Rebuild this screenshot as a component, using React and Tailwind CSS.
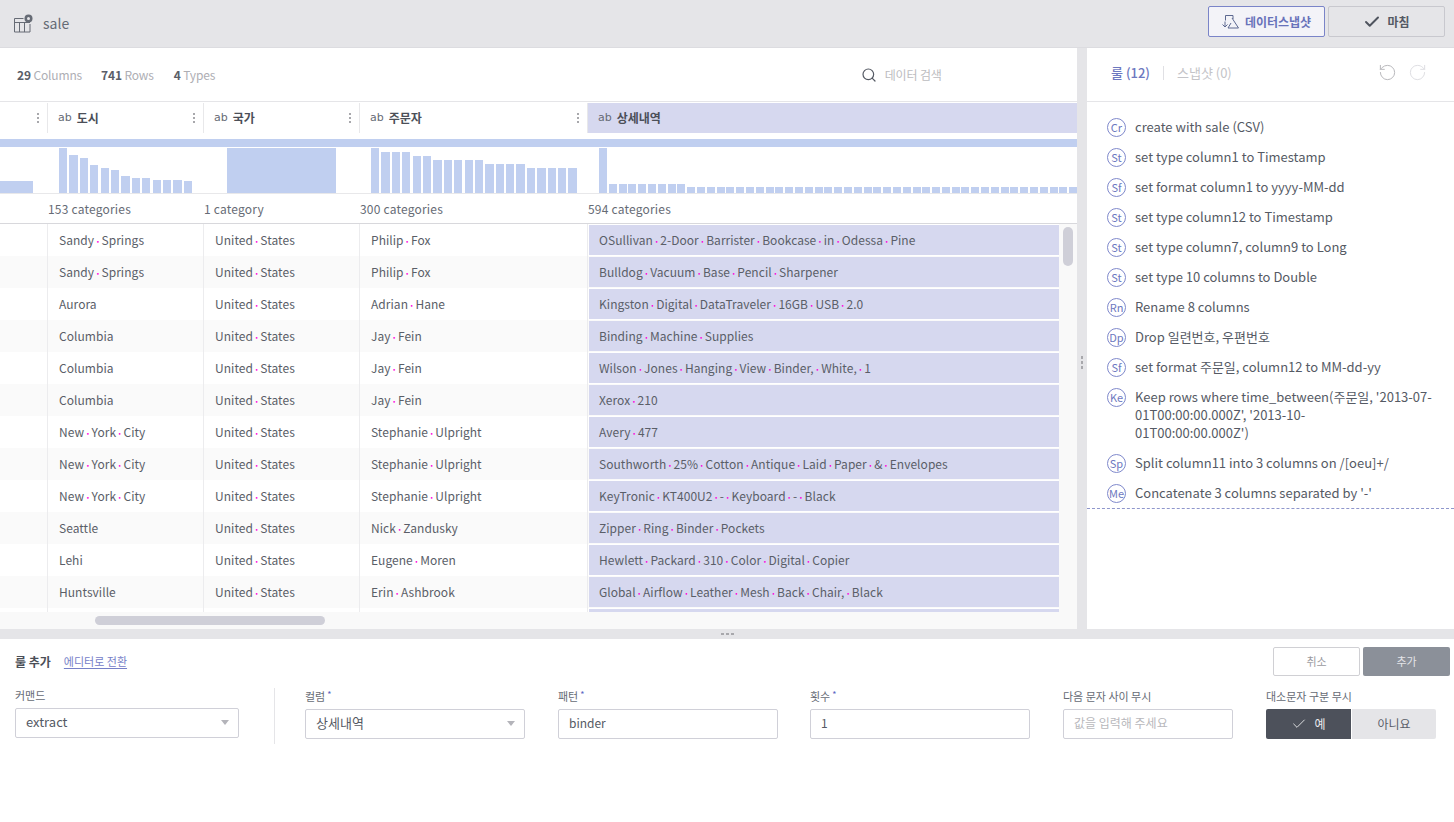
import React from 'react';
import { Check, RotateCcw, RotateCw, Search } from 'lucide-react';

const FONT = '"Noto Sans CJK KR", "Noto Sans", sans-serif';

const rows = [
  ['Sandy Springs', 'United States', 'Philip Fox', 'OSullivan 2-Door Barrister Bookcase in Odessa Pine'],
  ['Sandy Springs', 'United States', 'Philip Fox', 'Bulldog Vacuum Base Pencil Sharpener'],
  ['Aurora', 'United States', 'Adrian Hane', 'Kingston Digital DataTraveler 16GB USB 2.0'],
  ['Columbia', 'United States', 'Jay Fein', 'Binding Machine Supplies'],
  ['Columbia', 'United States', 'Jay Fein', 'Wilson Jones Hanging View Binder, White, 1'],
  ['Columbia', 'United States', 'Jay Fein', 'Xerox 210'],
  ['New York City', 'United States', 'Stephanie Ulpright', 'Avery 477'],
  ['New York City', 'United States', 'Stephanie Ulpright', 'Southworth 25% Cotton Antique Laid Paper & Envelopes'],
  ['New York City', 'United States', 'Stephanie Ulpright', 'KeyTronic KT400U2 - Keyboard - Black'],
  ['Seattle', 'United States', 'Nick Zandusky', 'Zipper Ring Binder Pockets'],
  ['Lehi', 'United States', 'Eugene Moren', 'Hewlett Packard 310 Color Digital Copier'],
  ['Huntsville', 'United States', 'Erin Ashbrook', 'Global Airflow Leather Mesh Back Chair, Black'],
];

const rules = [
  ['Cr', 'create with sale (CSV)'],
  ['St', 'set type column1 to Timestamp'],
  ['Sf', 'set format column1 to yyyy-MM-dd'],
  ['St', 'set type column12 to Timestamp'],
  ['St', 'set type column7, column9 to Long'],
  ['St', 'set type 10 columns to Double'],
  ['Rn', 'Rename 8 columns'],
  ['Dp', 'Drop 일련번호, 우편번호'],
  ['Sf', 'set format 주문일, column12 to MM-dd-yy'],
  ['Ke', "Keep rows where time_between(주문일, '2013-07-\n01T00:00:00.000Z', '2013-10-\n01T00:00:00.000Z')"],
  ['Sp', 'Split column11 into 3 columns on /[oeu]+/'],
  ['Me', "Concatenate 3 columns separated by '-'"],
];

const cityBars = [45, 38, 35, 28, 25, 23, 17, 15, 15, 13, 13, 13, 12];
const nameBars = [45, 41, 41, 41, 37, 37, 33, 33, 33, 33, 33, 29, 29, 29, 29, 25, 25, 25, 25, 25];
const detailBars = [45, 9, 9, 9, 9, 9, 9, 9, 9, ...Array(41).fill(6)];

// spaces in cell values show up as small pink dots
const Spaced = ({ text }) => {
  const parts = text.split(' ');
  return (
    <span className="whitespace-nowrap">
      {parts.map((p, i) => (
        <React.Fragment key={i}>
          {i > 0 && <span className="text-[#ff00dd] font-bold text-[9px] mx-[1px]">·</span>}
          {p}
        </React.Fragment>
      ))}
    </span>
  );
};

const HeaderCell = ({ name, className, selected }) => (
  <div className={`flex items-center h-full pl-[10px] pr-[8px] ${className} ${selected ? 'bg-[#d6d8ef]' : 'border-r border-[#e8e8ea]'}`}>
    <span className="text-[11px] text-[#666b75] mr-[5px]" style={{ fontFamily: '"DejaVu Sans", sans-serif' }}>ab</span>
    <span className="text-[12px] font-bold text-[#4b4f58] flex-1">{name}</span>
    {!selected && (
      <span className="flex flex-col gap-[2px]">
        <i className="block w-[2px] h-[2px] bg-[#a8a8ac]" />
        <i className="block w-[2px] h-[2px] bg-[#a8a8ac]" />
        <i className="block w-[2px] h-[2px] bg-[#a8a8ac]" />
      </span>
    )}
  </div>
);

const Bars = ({ data, className, barClass }) => (
  <div className={`flex items-end h-full overflow-hidden ${className}`}>
    {data.map((h, i) => (
      <div key={i} className={`shrink-0 bg-[#c0cff0] ${barClass}`} style={{ height: h }} />
    ))}
  </div>
);

const Field = ({ label, required, className, children }) => (
  <div className={className}>
    <div className="h-[15px] flex items-start text-[11px] leading-[15px] text-[#666b75] mb-[5px] whitespace-nowrap">
      {label}
      {required && <span className="text-[#5b66c4] text-[9px] leading-[11px] ml-[2px]">*</span>}
    </div>
    {children}
  </div>
);

const Input = ({ value, placeholder }) => (
  <div className="h-[30px] border border-[#d0d0d8] rounded-[2px] bg-white px-[10px] pb-[2px] flex items-center text-[12px]">
    {value ? <span className="text-[#555a64]">{value}</span> : <span className="text-[#b8b8bc]">{placeholder}</span>}
  </div>
);

const Select = ({ value }) => (
  <div className="h-[30px] border border-[#d0d0d8] rounded-[2px] bg-white pl-[10px] pr-[9px] pb-[2px] flex items-center justify-between text-[13px] text-[#555a64]">
    {value}
    <span className="w-0 h-0 border-x-[4px] border-x-transparent border-t-[5px] border-t-[#b4b4ba]" />
  </div>
);

export default function App() {
  return (
    <div className="w-[1454px] h-[822px] overflow-hidden flex flex-col bg-white" style={{ fontFamily: FONT }}>
      {/* top bar */}
      <div className="h-[48px] shrink-0 bg-[#e5e5e8] border-b border-[#dcdce0] flex items-center pl-[14px] pr-[9px]">
        <svg width="19" height="19" viewBox="0 0 19 19" fill="none" stroke="#666b75" strokeWidth="1" className="mr-[10px]">
          <path d="M9.5 4.5H0.5V18H16V10" />
          <path d="M0.5 8.5H16M5.5 8.5V18M10.5 8.5V18" />
          <circle cx="14.5" cy="4.5" r="4" fill="#666b75" stroke="none" />
          <circle cx="14.5" cy="4.5" r="1.5" fill="#e5e5e8" stroke="none" />
        </svg>
        <span className="text-[14px] text-[#666b75] flex-1">sale</span>
        <button className="w-[117px] h-[31px] mr-[3px] mb-[4px] border border-[#7a84c8] rounded-[2px] bg-[#f3f3f8] flex items-center justify-center text-[12px] font-bold text-[#6872ba]">
          <svg width="17" height="14" viewBox="0 0 17 14" fill="none" stroke="#5c6890" strokeWidth="1" className="mr-[6px]">
            <path d="M3.5 5.5V0.5H11V4" />
            <path d="M10 3L16.5 13H6L9 8" />
            <path d="M3 6.5V12M0.5 9.5L3 12L5.5 9.5" />
          </svg>
          데이터스냅샷
        </button>
        <button className="w-[117px] h-[31px] mb-[4px] border border-[#c8c8ce] rounded-[2px] bg-[#e5e5e8] flex items-center justify-center text-[12px] font-bold text-[#555a64]">
          <Check size={18} strokeWidth={2.6} color="#4f545e" className="mr-[6px]" />
          마침
        </button>
      </div>

      {/* main */}
      <div className="h-[581px] shrink-0 flex">
        <div className="w-[1077px] shrink-0 flex flex-col">
          <div className="h-[54px] shrink-0 border-b border-[#e5e5e8] flex items-center pl-[17px] text-[12px] tracking-[-0.15px] text-[#aeaeb4]">
            <span className="mr-[19px]"><b className="text-[#5a5e68] font-bold">29</b> Columns</span>
            <span className="mr-[20px]"><b className="text-[#5a5e68] font-bold">741</b> Rows</span>
            <span className="w-[687px]"><b className="text-[#5a5e68] font-bold">4</b> Types</span>
            <Search size={16} strokeWidth={1.8} color="#555a64" className="mr-[8px]" />
            <span className="text-[#bcbcc0]">데이터 검색</span>
          </div>

          <div className="h-[30px] shrink-0 flex mt-[1px]">
            <HeaderCell name="" className="w-[48px] !pl-0 [&>span:first-child]:invisible" />
            <HeaderCell name="도시" className="w-[156px]" />
            <HeaderCell name="국가" className="w-[156px]" />
            <HeaderCell name="주문자" className="w-[228px]" />
            <HeaderCell name="상세내역" className="flex-1" selected />
          </div>

          <div className="h-[8px] shrink-0 bg-[#c0cff0] mt-[6px]" />

          <div className="h-[47px] shrink-0 flex border-b border-[#e8e8ea] pt-[1px]">
            <Bars data={[12]} className="w-[48px]" barClass="w-[33px]" />
            <Bars data={cityBars} className="w-[156px] pl-[11px]" barClass="w-[8.3px] mr-[2.1px]" />
            <Bars data={[45]} className="w-[156px] pl-[23px]" barClass="w-[109px]" />
            <Bars data={nameBars} className="w-[228px] pl-[11px]" barClass="w-[8.3px] mr-[2.1px]" />
            <Bars data={detailBars} className="flex-1 pl-[11px]" barClass="w-[8px] mr-[1.8px]" />
          </div>

          <div className="h-[30px] shrink-0 flex items-center border-b border-[#d8d8dc] text-[12px] tracking-[0.2px] text-[#666b75]">
            <div className="w-[48px]" />
            <div className="w-[156px]">153 categories</div>
            <div className="w-[156px]">1 category</div>
            <div className="w-[228px]">300 categories</div>
            <div>594 categories</div>
          </div>

          <div className="flex-1 min-h-0 flex">
            <div className="w-[1059px] flex flex-col">
              <div className="h-[388px] shrink-0 overflow-hidden text-[12px] tracking-[0.04px] text-[#5a5e68]">
                {[...rows, ['', '', '', '']].map((r, i) => (
                  <div key={i} className={`h-[32px] flex ${i % 2 ? 'bg-[#fafafa]' : 'bg-white'}`}>
                    <div className="w-[48px] border-r border-[#ececee]" />
                    <div className="w-[156px] border-r border-[#ececee] pl-[11px] flex items-center"><Spaced text={r[0]} /></div>
                    <div className="w-[156px] border-r border-[#ececee] pl-[11px] flex items-center"><Spaced text={r[1]} /></div>
                    <div className="w-[228px] border-r border-[#ececee] pl-[11px] flex items-center"><Spaced text={r[2]} /></div>
                    <div className="flex-1 pl-[1px] py-[1px]">
                      <div className="h-full bg-[#d6d8ef] pl-[10px] flex items-center"><Spaced text={r[3]} /></div>
                    </div>
                  </div>
                ))}
              </div>
              <div className="h-[17px] shrink-0 bg-[#f9f9f9] pl-[95px] pt-[4px]">
                <div className="w-[230px] h-[9px] rounded-full bg-[#cfcfd8]" />
              </div>
            </div>
            <div className="w-[18px] bg-[#f9f9f9] pl-[4px] pt-[3px]">
              <div className="w-[10px] h-[39px] rounded-full bg-[#cfcfd8]" />
            </div>
          </div>
        </div>

        {/* vertical splitter */}
        <div className="w-[10px] shrink-0 bg-[#e5e5e8] flex flex-col items-center justify-center gap-[2px] pt-[48px]">
          <i className="block w-[2px] h-[3px] bg-[#a8a8ac]" />
          <i className="block w-[2px] h-[3px] bg-[#a8a8ac]" />
          <i className="block w-[2px] h-[3px] bg-[#a8a8ac]" />
        </div>

        {/* rule panel */}
        <div className="flex-1 min-w-0 flex flex-col">
          <div className="h-[54px] shrink-0 border-b border-[#e5e5e8] flex items-center pl-[24px] pb-[4px] text-[13px]">
            <span className="font-medium text-[#6d78c0]">룰 (12)</span>
            <span className="w-px h-[14px] bg-[#e0e0e4] mx-[13px]" />
            <span className="text-[#c4c4c8] flex-1">스냅샷 (0)</span>
            <RotateCcw size={19} strokeWidth={1.2} color="#b4b4b8" className="mr-[11px]" />
            <RotateCw size={19} strokeWidth={1.2} color="#dcdce0" className="mr-[27px]" />
          </div>
          <div className="pt-[16px] pl-[20px] pr-[14px] pb-[6px] border-b border-dashed border-[#8f97cc] flex flex-col gap-[12px]">
            {rules.map(([code, text], i) => (
              <div key={i} className="flex items-start text-[13px] leading-[18px] text-[#555a64]">
                <span className="w-[19px] h-[19px] -mb-[1px] shrink-0 rounded-full border border-[#7f89cc] flex items-center justify-center text-[11px] leading-none text-[#6d78c0] mr-[9px]">{code}</span>
                <span className="whitespace-pre-line min-w-0">{text}</span>
              </div>
            ))}
          </div>
        </div>
      </div>

      {/* horizontal splitter */}
      <div className="h-[10px] shrink-0 bg-[#e5e5e8] flex items-center justify-center gap-[2px]">
        <i className="block w-[3px] h-[2px] bg-[#a8a8ac]" />
        <i className="block w-[3px] h-[2px] bg-[#a8a8ac]" />
        <i className="block w-[3px] h-[2px] bg-[#a8a8ac]" />
      </div>

      {/* add rule form */}
      <div className="flex-1 pl-[15px] pr-[4px] pt-[8px]">
        <div className="flex items-center h-[29px]">
          <span className="text-[12px] font-bold text-[#4b4f58] mr-[13px]">룰 추가</span>
          <a className="text-[11px] text-[#7680c8] underline underline-offset-2 flex-1">에디터로 전환</a>
          <button className="w-[87px] h-[29px] mr-[3px] border border-[#d0d0d4] rounded-[2px] bg-white text-[11px] text-[#9a9aa0]">취소</button>
          <button className="w-[87px] h-[29px] rounded-[2px] bg-[#8b9099] text-[11px] text-[#e4e4e8]">추가</button>
        </div>
        <div className="flex items-start mt-[12px]">
          <Field label="커맨드" className="w-[224px]"><Select value="extract" /></Field>
          <div className="w-px h-[56px] bg-[#e5e5e8] ml-[35px] mr-[30px]" />
          <Field label="컬럼" required className="w-[220px] mt-[1px]"><Select value="상세내역" /></Field>
          <Field label="패턴" required className="w-[220px] ml-[33px] mt-[1px]"><Input value="binder" /></Field>
          <Field label="횟수" required className="w-[220px] ml-[32px] mt-[1px]"><Input value="1" /></Field>
          <Field label="다음 문자 사이 무시" className="w-[170px] ml-[33px] mt-[1px]"><Input placeholder="값을 입력해 주세요" /></Field>
          <Field label="대소문자 구분 무시" className="w-[170px] ml-[33px] mt-[1px]">
            <div className="flex h-[30px] gap-[1px] text-[12px]">
              <div className="w-[85px] rounded-l-[2px] bg-[#4d515b] text-[#e8e8ec] flex items-center justify-center">
                <Check size={16} strokeWidth={1.2} color="#ffffff" className="mr-[7px]" />예
              </div>
              <div className="w-[84px] rounded-r-[2px] bg-[#e5e5e8] text-[#5a5e68] flex items-center justify-center">아니요</div>
            </div>
          </Field>
        </div>
      </div>
    </div>
  );
}
